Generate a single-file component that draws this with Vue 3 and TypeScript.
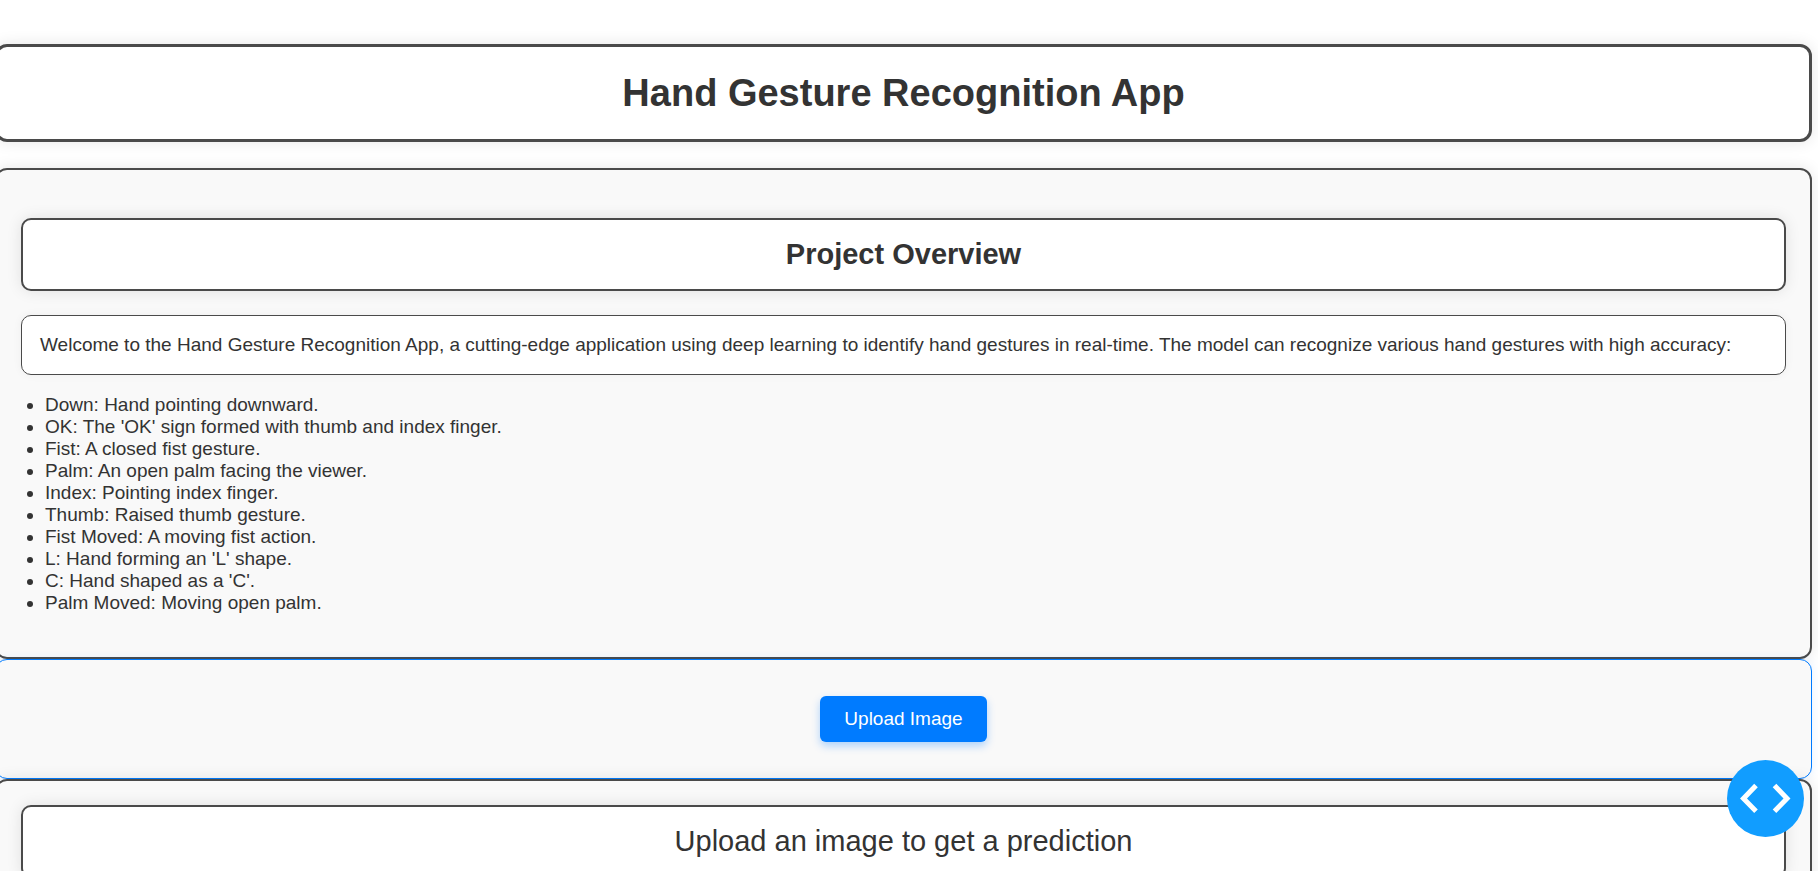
<script setup lang="ts">
import { ref } from 'vue'

interface Gesture {
  name: string
  description: string
}

const gestures: Gesture[] = [
  { name: 'Down', description: 'Hand pointing downward.' },
  { name: 'OK', description: "The 'OK' sign formed with thumb and index finger." },
  { name: 'Fist', description: 'A closed fist gesture.' },
  { name: 'Palm', description: 'An open palm facing the viewer.' },
  { name: 'Index', description: 'Pointing index finger.' },
  { name: 'Thumb', description: 'Raised thumb gesture.' },
  { name: 'Fist Moved', description: 'A moving fist action.' },
  { name: 'L', description: "Hand forming an 'L' shape." },
  { name: 'C', description: "Hand shaped as a 'C'." },
  { name: 'Palm Moved', description: 'Moving open palm.' },
]

const picker = ref<HTMLInputElement | null>(null)

function openPicker(): void {
  picker.value?.click()
}
</script>

<template>
  <div class="page">
    <main class="content">
      <h1 class="title">Hand Gesture Recognition App</h1>

      <section class="panel">
        <h2 class="card heading">Project Overview</h2>
        <p class="card intro">
          Welcome to the Hand Gesture Recognition App, a cutting-edge application using deep learning to identify hand
          gestures in real-time. The model can recognize various hand gestures with high accuracy:
        </p>
        <ul class="gestures">
          <li v-for="gesture in gestures" :key="gesture.name">{{ gesture.name }}: {{ gesture.description }}</li>
        </ul>
      </section>

      <section class="upload">
        <button class="upload-button" type="button" @click="openPicker">Upload Image</button>
        <input ref="picker" type="file" accept="image/*" aria-label="Image file" hidden />
      </section>

      <section class="panel result">
        <div class="card prompt">Upload an image to get a prediction</div>
      </section>
    </main>

    <button class="dev-button" type="button" aria-label="Developer tools">
      <svg viewBox="0 0 77 77" aria-hidden="true">
        <path d="M29 25.5 16.5 38.5 29 51.2M47.5 25.5 60 38.5 47.5 51.2" />
      </svg>
    </button>
  </div>
</template>

<style>
body {
  margin: 0;
  background: #fff;
}
</style>

<style scoped>
.page {
  height: 100vh;
  overflow: hidden;
  color: #333;
  font-family: "Liberation Sans", Arial, sans-serif;
  font-size: 19px;
  line-height: 22px;
}

.content {
  margin: 0 6px 0 -5px;
  padding-top: 44px;
}

.title {
  margin: 0 0 26px;
  padding: 24px;
  border: 3px solid #4a4a4a;
  border-radius: 12px;
  background: #fff;
  box-shadow: 0 0 15px rgba(0, 0, 0, 0.1);
  font-size: 38px;
  line-height: 44px;
  text-align: center;
}

.panel {
  padding: 24px;
  border: 2px solid #4a4a4a;
  border-radius: 12px;
  background: #f9f9f9;
  box-shadow: 0 0 15px rgba(0, 0, 0, 0.1);
}

.card {
  padding: 18px;
  border: 2px solid #4a4a4a;
  border-radius: 10px;
  background: #fff;
  box-shadow: 0 0 15px rgba(0, 0, 0, 0.1);
}

.heading,
.prompt {
  font-size: 29px;
  line-height: 33px;
  text-align: center;
}

.heading {
  margin: 24px 0;
}

.intro {
  margin: 0;
  border-width: 1px;
  box-shadow: 0 0 10px rgba(0, 0, 0, 0.05);
}

.gestures {
  margin: 19px 0;
  padding-left: 24px;
}

.upload {
  padding: 36px;
  border: 1px solid #007bff;
  border-radius: 12px;
  background: #f9f9f9;
  box-shadow: 0 0 10px rgba(0, 123, 255, 0.1);
  text-align: center;
}

.upload-button {
  display: block;
  margin: 0 auto;
  padding: 12px 24px;
  border: 0;
  border-radius: 6px;
  background: #007bff;
  box-shadow: 0 4px 8px rgba(0, 123, 255, 0.3);
  color: #fff;
  font: inherit;
  cursor: pointer;
}

.dev-button {
  position: fixed;
  right: 14px;
  bottom: 34px;
  width: 77px;
  height: 77px;
  padding: 0;
  border: 0;
  border-radius: 50%;
  background: #119dff;
  cursor: pointer;
}

.dev-button svg {
  display: block;
  width: 100%;
  fill: none;
  stroke: #fff;
  stroke-width: 5;
}
</style>
